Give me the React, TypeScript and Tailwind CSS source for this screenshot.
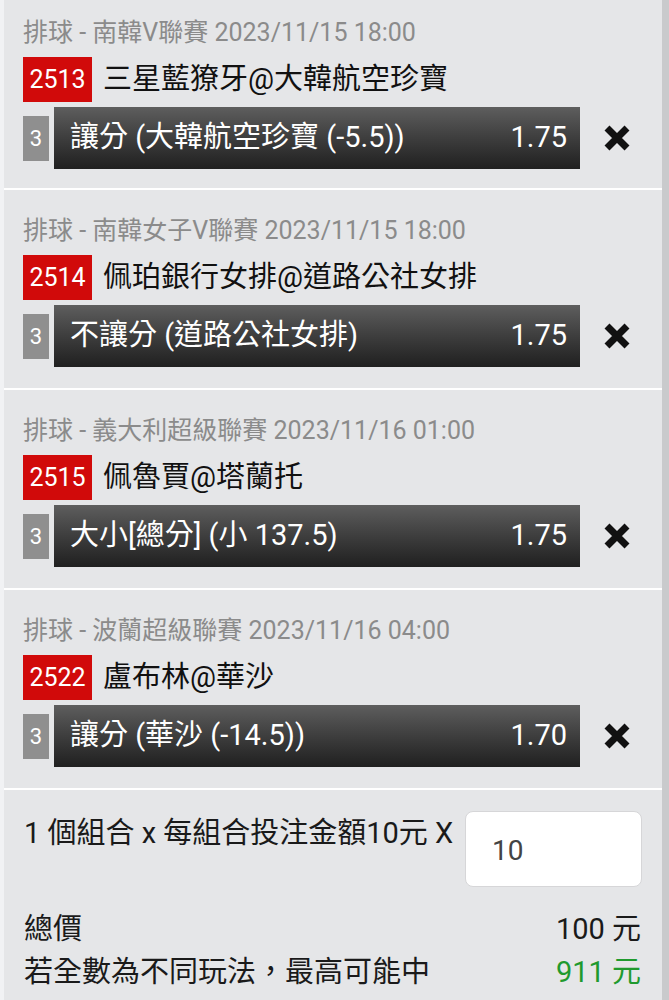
import React from "react"

type Bet = {
  league: string
  code: string
  teams: string
  pick: string
  odds: string
}

const bets: Bet[] = [
  { league: "排球 - 南韓V聯賽 2023/11/15 18:00", code: "2513", teams: "三星藍獠牙@大韓航空珍寶", pick: "讓分 (大韓航空珍寶 (-5.5))", odds: "1.75" },
  { league: "排球 - 南韓女子V聯賽 2023/11/15 18:00", code: "2514", teams: "佩珀銀行女排@道路公社女排", pick: "不讓分 (道路公社女排)", odds: "1.75" },
  { league: "排球 - 義大利超級聯賽 2023/11/16 01:00", code: "2515", teams: "佩魯賈@塔蘭托", pick: "大小[總分] (小 137.5)", odds: "1.75" },
  { league: "排球 - 波蘭超級聯賽 2023/11/16 04:00", code: "2522", teams: "盧布林@華沙", pick: "讓分 (華沙 (-14.5))", odds: "1.70" },
]

const CloseIcon = () => (
  <svg width="28" height="28" viewBox="0 0 28 28">
    <path d="M4 4 L24 24 M24 4 L4 24" stroke="#111" strokeWidth="7" strokeLinecap="butt" />
  </svg>
)

const BetCard = ({ bet, first }: { bet: Bet; first: boolean }) => {
  return (
    <div className={`border-b-2 border-white pl-[19px] ${first ? "pt-[19px] h-[190px]" : "pt-[27px] h-[200px]"}`}>
      <div className="h-[28px] leading-[28px] text-[25px] text-[#8b8b8b] whitespace-nowrap">{bet.league}</div>
      <div className="flex items-center mt-[10px] h-[45px]">
        <div className="bg-[#d10a0a] text-white h-[45px] w-[69px] flex items-center justify-center text-[25px]">
          {bet.code}
        </div>
        <div className="ml-[11px] text-[29px] text-[#111] whitespace-nowrap">{bet.teams}</div>
      </div>
      <div className="flex items-center mt-[5px]">
        <div className="w-[26px] h-[45px] bg-[#8f8f8f] text-white text-[22px] flex items-center justify-center">3</div>
        <div className="ml-[5px] w-[526px] h-[62px] bg-linear-to-b from-[#5e5e5e] to-[#202020] flex items-center justify-between pl-[16px] pr-[13px] text-white text-[29px]">
          <span className="whitespace-nowrap">{bet.pick}</span>
          <span>{bet.odds}</span>
        </div>
        <div className="ml-[23px]">
          <CloseIcon />
        </div>
      </div>
    </div>
  )
}

export default function App() {
  return (
    <div
      className="w-[669px] h-[1000px] overflow-hidden flex bg-[#e5e6e8]"
      style={{ fontFamily: "Roboto, 'Noto Sans CJK TC', sans-serif" }}
    >
      <div className="w-[4px] bg-[#f1f2f4]" />
      <div className="flex-1 flex flex-col">
        {bets.map((b, i) => (
          <BetCard key={b.code} bet={b} first={i === 0} />
        ))}
        <div className="pl-[20px] pr-[20px] pt-[21px]">
          <div className="flex items-start justify-between">
            <div className="mt-[4px] h-[36px] leading-[36px] text-[29px] text-[#1a1a1a] whitespace-nowrap">
              1 個組合 x 每組合投注金額10元 X
            </div>
            <div className="w-[177px] h-[76px] bg-white rounded-[8px] border border-[#d6d6d8] flex items-center pl-[26px] pt-[4px] text-[28px] text-[#444]">
              10
            </div>
          </div>
          <div className="mt-[21px] h-[43px] flex items-center justify-between text-[29px] text-[#1a1a1a]">
            <span>總價</span>
            <span className="mr-[1px]">100 元</span>
          </div>
          <div className="h-[43px] flex items-center justify-between text-[29px] text-[#1a1a1a]">
            <span>若全數為不同玩法，最高可能中</span>
            <span className="mr-[1px] text-[#1f9a2e]">911 元</span>
          </div>
        </div>
      </div>
      <div className="w-[7px] bg-[#c9cacc]" />
    </div>
  )
}
